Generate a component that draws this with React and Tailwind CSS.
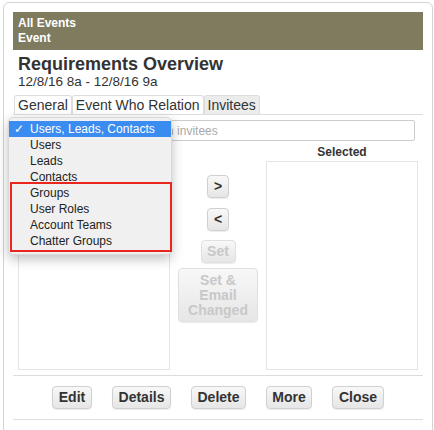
import React from 'react';

const font = { fontFamily: '"Liberation Sans", Arial, sans-serif' };

function Btn({ children, disabled, className = '' }) {
  return (
    <div
      className={`flex items-center justify-center rounded-[4px] border bg-gradient-to-b from-[#f8f8f8] to-[#e6e6e6] font-bold leading-[15px] shadow-[0_1px_1px_rgba(0,0,0,0.08)] ${disabled ? 'border-[#e0e0e0] text-[#c8c8c8]' : 'border-[#d0d0d0] text-[#333]'} ${className}`}
    >
      {children}
    </div>
  );
}

const options = ['Users', 'Leads', 'Contacts', 'Groups', 'User Roles', 'Account Teams', 'Chatter Groups'];

export default function App() {
  return (
    <div className="relative h-[430px] w-[434px] overflow-hidden bg-white" style={font}>
      <div className="ml-[3px] mt-[2px] h-[440px] w-[430px] rounded-[6px] border border-[#d4d4d4] bg-white px-[9px] pt-[9px]">
        <div className="h-[38px] bg-[#7f7b5f] px-[5px] pt-[4px] text-[12px] font-bold leading-[15px] text-white">
          <div>All Events</div>
          <div>Event</div>
        </div>

        <div className="px-[5px] pt-[4px] text-[#333]">
          <div className="text-[18px] font-bold leading-[20px]">Requirements Overview</div>
          <div className="text-[13.5px] leading-[16px]">12/8/16 8a - 12/8/16 9a</div>
        </div>

        <div className="mt-[5px] flex border-b border-[#ddd] pl-[1px] text-[14px] leading-[18px] text-[#333]">
          <div className="rounded-t-[3px] border border-b-0 border-[#ddd] px-[3px]">General</div>
          <div className="rounded-t-[3px] border border-b-0 border-[#ddd] px-[3px]">Event Who Relation</div>
          <div className="rounded-t-[3px] border border-b-0 border-[#ddd] bg-[#ececec] px-[3px]">Invitees</div>
        </div>

        <div className="px-[5px] pt-[5px]">
          <div className="flex h-[21px] w-[397px] items-center rounded-[2px] border border-[#ccc] pl-[18px] text-[12px] text-[#aaa]">
            Search by name to add in invitees
          </div>

          <div className="mt-[4px] flex">
            <div className="flex w-[152px] flex-col">
              <div className="h-[16px]" />
              <div className="h-[209px] border border-[#e4e4e4]" />
            </div>
            <div className="flex w-[96px] flex-col items-center pt-[30px] text-[14px]">
              <Btn className="h-[23px] w-[22px]">&gt;</Btn>
              <Btn className="mt-[10px] h-[23px] w-[22px]">&lt;</Btn>
              <Btn disabled className="mt-[9px] h-[23px] w-[35px]">Set</Btn>
              <Btn disabled className="mt-[5px] h-[54px] w-[80px] flex-col text-center">
                <span>Set &amp;</span>
                <span>Email</span>
                <span>Changed</span>
              </Btn>
            </div>
            <div className="flex w-[152px] flex-col">
              <div className="h-[16px] text-center text-[12px] font-bold leading-[14px] text-[#333]">Selected</div>
              <div className="h-[209px] border border-[#e4e4e4]" />
            </div>
          </div>
        </div>

        <div className="mt-[5px] border-t border-[#ddd]" />
        <div className="flex justify-center gap-[20px] py-[10px] text-[14px]">
          <Btn className="h-[23px] w-[40px]">Edit</Btn>
          <Btn className="h-[23px] w-[59px]">Details</Btn>
          <Btn className="h-[23px] w-[55px]">Delete</Btn>
          <Btn className="h-[23px] w-[46px]">More</Btn>
          <Btn className="h-[23px] w-[52px]">Close</Btn>
        </div>
        <div className="border-t border-[#ddd]" />
      </div>

      <div className="absolute left-[8px] top-[117px] w-[164px] rounded-[5px] border border-[#d8d8d8] bg-[#f0f0f0] pb-[5px] pt-[3px] text-[12px] leading-[16px] text-[#222] shadow-[0_4px_12px_rgba(0,0,0,0.25)]">
        <div className="relative bg-[#3b8cf0] pl-[21px] text-white">
          <span className="absolute left-[5px] top-0">✓</span>
          Users, Leads, Contacts
        </div>
        {options.map((o) => (
          <div key={o} className="pl-[21px]">{o}</div>
        ))}
        <div className="absolute left-[1px] top-[64px] h-[70px] w-[162px] border-2 border-[#e8261d]" />
      </div>
    </div>
  );
}
